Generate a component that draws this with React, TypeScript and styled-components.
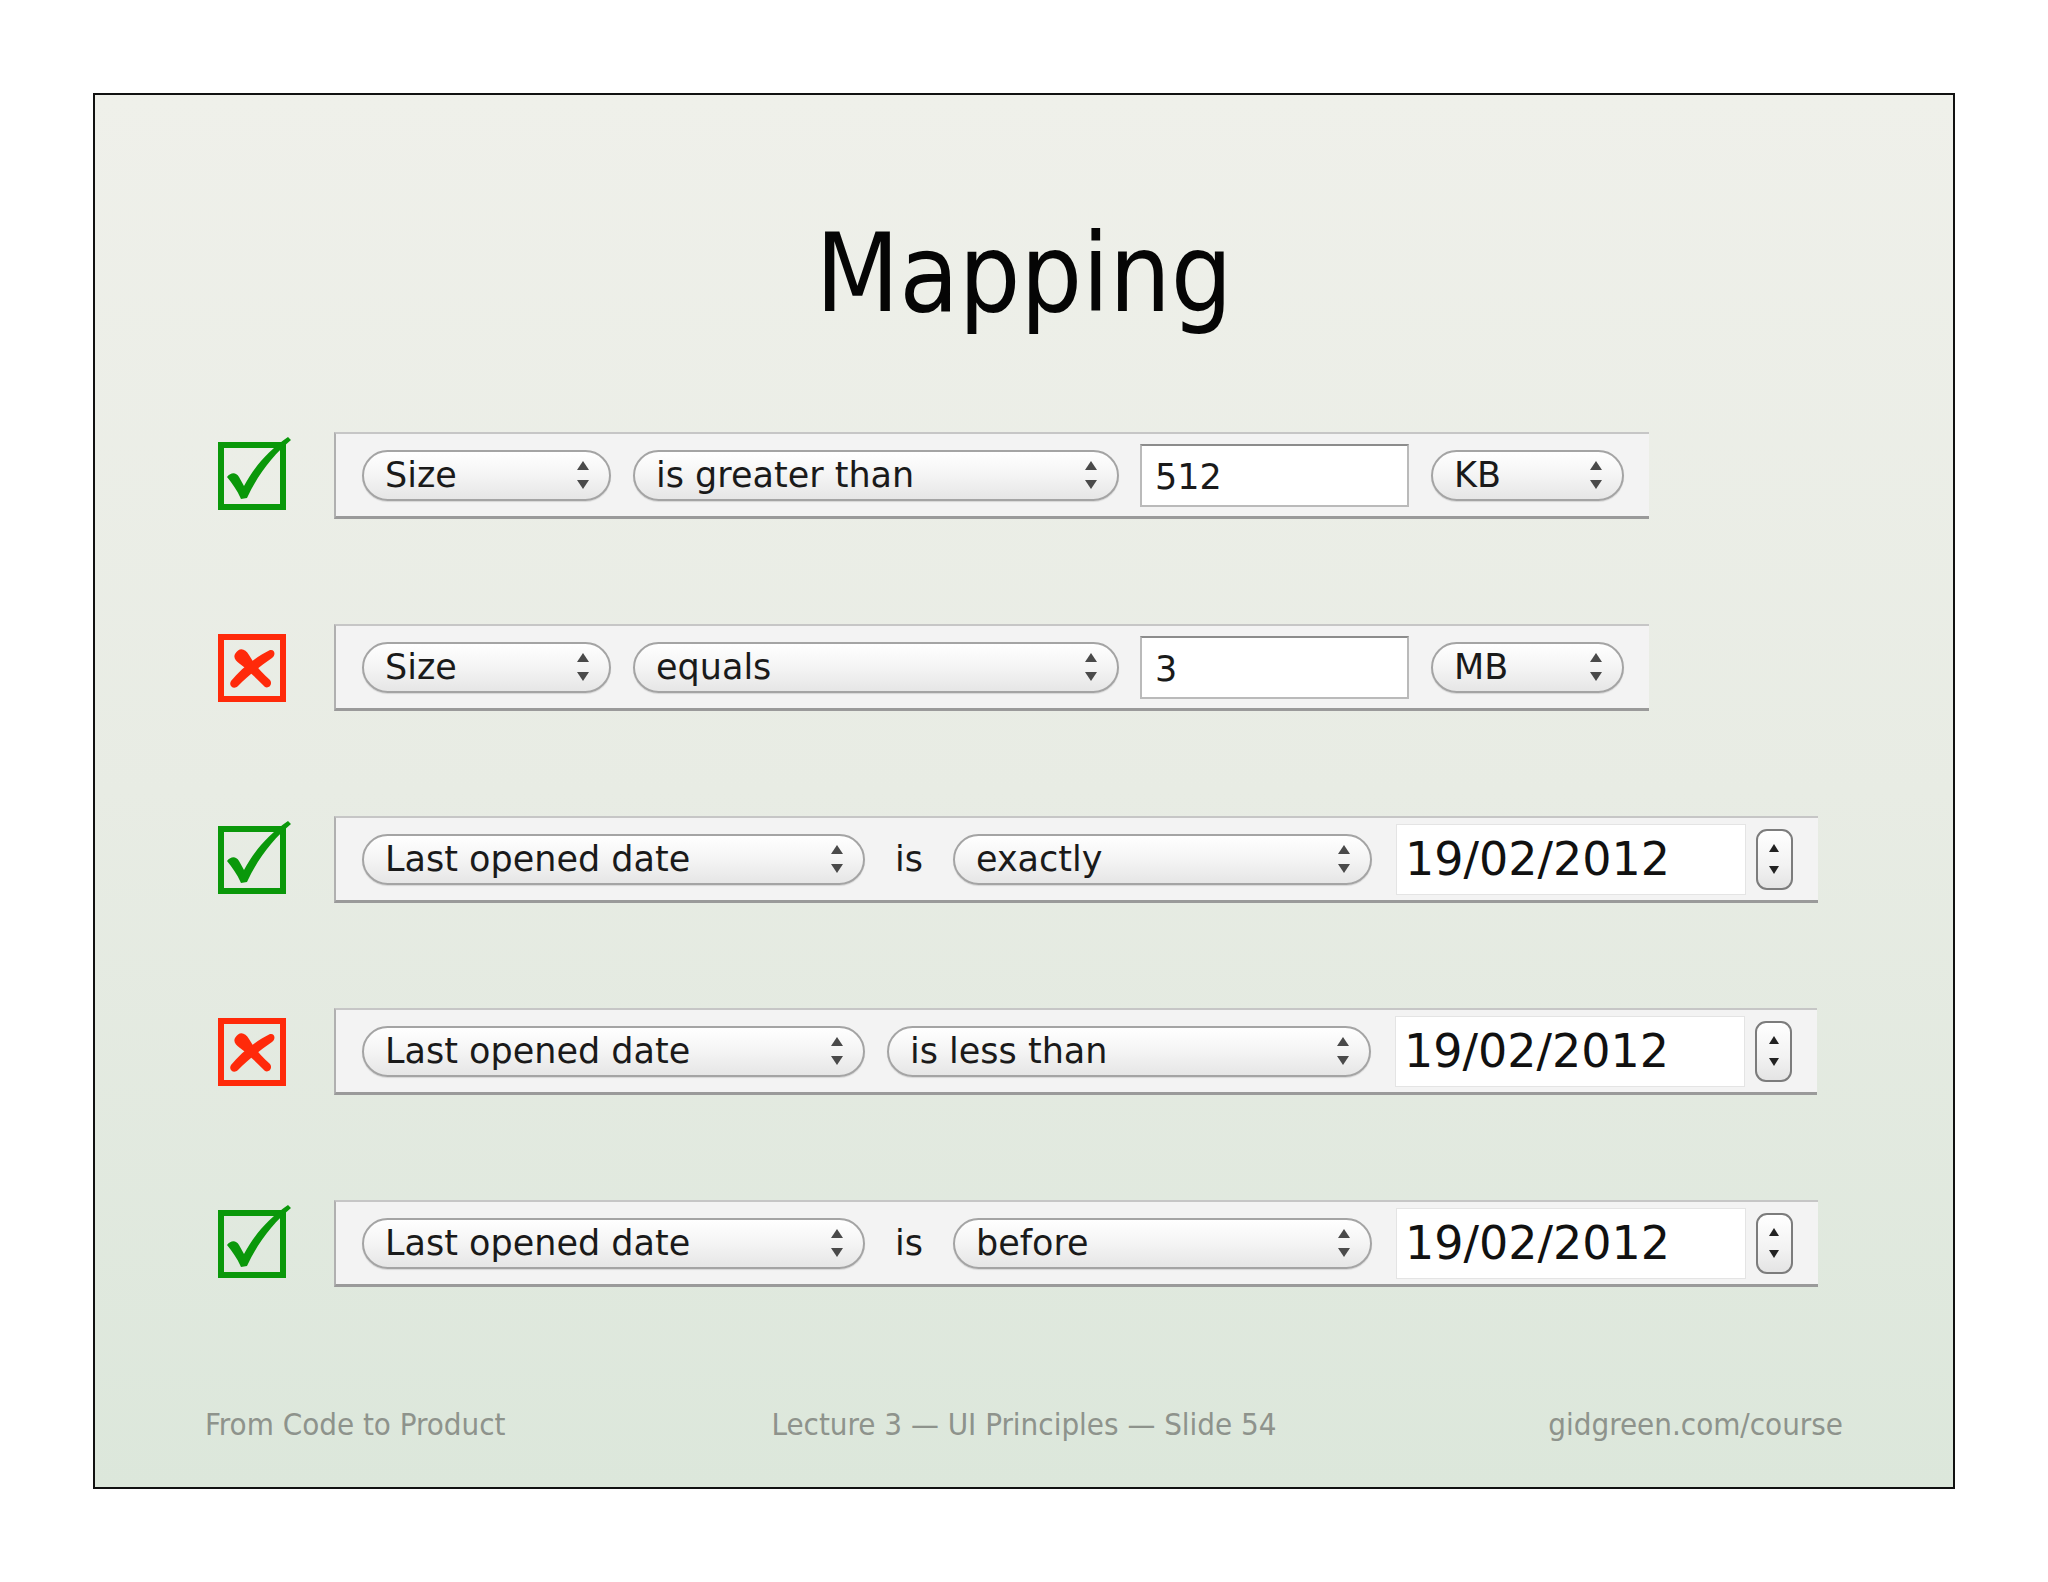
import React from 'react';
import styled, { createGlobalStyle } from 'styled-components';

const GlobalStyle = createGlobalStyle`
  html, body {
    margin: 0;
    padding: 0;
    background: #ffffff;
  }
  body {
    font-family: 'DejaVu Sans', 'Liberation Sans', sans-serif;
  }
`;

type Part =
  | { kind: 'popup'; text: string; width: number }
  | { kind: 'field'; text: string }
  | { kind: 'label'; text: string }
  | { kind: 'date'; text: string };

type Rule = { ok: boolean; parts: Part[] };

const rules: Rule[] = [
  {
    ok: true,
    parts: [
      { kind: 'popup', text: 'Size', width: 249 },
      { kind: 'popup', text: 'is greater than', width: 486 },
      { kind: 'field', text: '512' },
      { kind: 'popup', text: 'KB', width: 193 },
    ],
  },
  {
    ok: false,
    parts: [
      { kind: 'popup', text: 'Size', width: 249 },
      { kind: 'popup', text: 'equals', width: 486 },
      { kind: 'field', text: '3' },
      { kind: 'popup', text: 'MB', width: 193 },
    ],
  },
  {
    ok: true,
    parts: [
      { kind: 'popup', text: 'Last opened date', width: 503 },
      { kind: 'label', text: 'is' },
      { kind: 'popup', text: 'exactly', width: 419 },
      { kind: 'date', text: '19/02/2012' },
    ],
  },
  {
    ok: false,
    parts: [
      { kind: 'popup', text: 'Last opened date', width: 503 },
      { kind: 'popup', text: 'is less than', width: 484 },
      { kind: 'date', text: '19/02/2012' },
    ],
  },
  {
    ok: true,
    parts: [
      { kind: 'popup', text: 'Last opened date', width: 503 },
      { kind: 'label', text: 'is' },
      { kind: 'popup', text: 'before', width: 419 },
      { kind: 'date', text: '19/02/2012' },
    ],
  },
];

const CheckIcon = () => (
  <VerdictSvg viewBox="0 0 68 68">
    <rect x="3" y="3" width="62" height="62" fill="none" stroke="#0a980a" strokeWidth="6" />
    <path
      d="M9 35 C13 30 18 30 21 35 L26 44 C36 25 51 8 70 -5 L73 -2 C56 12 40 32 29 56 L23 57 C19 48 14 41 9 35 Z"
      fill="#0a980a"
    />
  </VerdictSvg>
);

const CrossIcon = () => (
  <VerdictSvg viewBox="0 0 68 68">
    <rect x="3" y="3" width="62" height="62" fill="none" stroke="#ff2a0a" strokeWidth="6" />
    <path
      d="M17 20 C21 13 27 14 31 21 C36 30 43 38 52 46 C55 50 51 55 47 53 C38 44 30 36 22 30 C18 27 15 24 17 20 Z"
      fill="#ff2a0a"
    />
    <path
      d="M52 16 C57 15 58 21 54 24 C42 32 30 42 20 52 C16 56 10 52 13 47 C22 36 36 24 52 16 Z"
      fill="#ff2a0a"
    />
  </VerdictSvg>
);

const UpDown = () => (
  <ArrowsSvg viewBox="0 0 12 28">
    <path d="M6 0 L12 9 L0 9 Z" fill="#4a4a4a" />
    <path d="M0 19 L12 19 L6 28 Z" fill="#4a4a4a" />
  </ArrowsSvg>
);

const renderPart = (part: Part, i: number) => {
  switch (part.kind) {
    case 'popup':
      return (
        <PopUp key={i} $width={part.width}>
          <span>{part.text}</span>
          <UpDown />
        </PopUp>
      );
    case 'field':
      return <TextField key={i}>{part.text}</TextField>;
    case 'label':
      return <Label key={i}>{part.text}</Label>;
    case 'date':
      return (
        <React.Fragment key={i}>
          <DateField>{part.text}</DateField>
          <Stepper>
            <StepTriangle $up />
            <StepTriangle />
          </Stepper>
        </React.Fragment>
      );
  }
};

export default function App() {
  return (
    <>
      <GlobalStyle />
      <Page>
        <Slide>
          <Title>Mapping</Title>
          <RuleList>
            {rules.map((rule, i) => (
              <RuleRow key={i}>
                <Verdict>{rule.ok ? <CheckIcon /> : <CrossIcon />}</Verdict>
                <Panel>{rule.parts.map(renderPart)}</Panel>
              </RuleRow>
            ))}
          </RuleList>
          <Footer>
            <FooterText $align="start">From Code to Product</FooterText>
            <FooterText $align="center">Lecture 3 — UI Principles — Slide 54</FooterText>
            <FooterText $align="end">gidgreen.com/course</FooterText>
          </Footer>
        </Slide>
      </Page>
    </>
  );
}

const Page = styled.div`
  width: 2048px;
  height: 1582px;
  padding: 93px 0 0 93px;
  box-sizing: border-box;
`;

const Slide = styled.div`
  width: 1862px;
  height: 1396px;
  box-sizing: border-box;
  border: 2px solid #111111;
  background: linear-gradient(180deg, #eff0ea 0%, #e8ece4 50%, #dce7db 100%);
  display: flex;
  flex-direction: column;
`;

const Title = styled.h1`
  margin: 0;
  padding-top: 125px;
  height: 108px;
  box-sizing: content-box;
  text-align: center;
  font-family: 'DejaVu Sans Condensed', 'DejaVu Sans', sans-serif;
  font-stretch: condensed;
  font-weight: 400;
  font-size: 108px;
  line-height: 108px;
  color: #050505;
`;

const RuleList = styled.div`
  margin-top: 104px;
  display: flex;
  flex-direction: column;
  gap: 105px;
`;

const RuleRow = styled.div`
  display: flex;
  align-items: center;
  gap: 48px;
  padding-left: 123px;
  height: 87px;
`;

const Verdict = styled.div`
  width: 68px;
  height: 68px;
  flex-shrink: 0;
`;

const VerdictSvg = styled.svg`
  width: 68px;
  height: 68px;
  overflow: visible;
  display: block;
`;

const Panel = styled.div`
  height: 87px;
  box-sizing: border-box;
  display: flex;
  align-items: center;
  gap: 22px;
  padding: 0 25px 0 26px;
  background: #f3f3f3;
  border-top: 2px solid #c6c6c6;
  border-bottom: 3px solid #9a9a9a;
  border-left: 2px solid #b0b0b0;
  font-family: 'DejaVu Sans', sans-serif;
  font-size: 35px;
  color: #1a1a1a;
`;

const PopUp = styled.div<{ $width: number }>`
  width: ${(p) => p.$width}px;
  height: 51px;
  box-sizing: border-box;
  flex-shrink: 0;
  display: flex;
  align-items: center;
  justify-content: space-between;
  padding: 0 20px 0 21px;
  border: 2px solid #a4a4a4;
  border-radius: 26px;
  background: linear-gradient(180deg, #ffffff 0%, #f4f4f4 50%, #e6e6e6 100%);
  box-shadow: 0 1px 1px rgba(0, 0, 0, 0.12);
  line-height: 1;
  white-space: nowrap;
`;

const ArrowsSvg = styled.svg`
  width: 12px;
  height: 28px;
  flex-shrink: 0;
`;

const TextField = styled.div`
  width: 269px;
  height: 63px;
  box-sizing: border-box;
  margin-left: -1px;
  display: flex;
  align-items: center;
  padding: 4px 0 0 13px;
  background: #ffffff;
  border: 2px solid #bababa;
  border-top-color: #8c8c8c;
  line-height: 1;
`;

const Label = styled.span`
  margin: 0 8px;
  line-height: 1;
`;

const DateField = styled.div`
  width: 350px;
  height: 71px;
  box-sizing: border-box;
  margin-left: 2px;
  display: flex;
  align-items: center;
  padding-left: 8px;
  background: #ffffff;
  border: 1px solid #e4e4e4;
  font-size: 46px;
  line-height: 1;
  color: #111111;
`;

const Stepper = styled.div`
  width: 37px;
  height: 61px;
  box-sizing: border-box;
  margin-left: -12px;
  display: flex;
  flex-direction: column;
  align-items: center;
  justify-content: center;
  gap: 14px;
  border: 2px solid #7c7c7c;
  border-radius: 11px;
  background: linear-gradient(180deg, #ffffff 0%, #f2f2f2 60%, #e4e4e4 100%);
`;

const StepTriangle = styled.div<{ $up?: boolean }>`
  width: 0;
  height: 0;
  border-left: 5px solid transparent;
  border-right: 5px solid transparent;
  ${(p) => (p.$up ? 'border-bottom: 8px solid #222;' : 'border-top: 8px solid #222;')}
`;

const Footer = styled.div`
  margin-top: auto;
  padding: 0 110px 47px;
  display: grid;
  grid-template-columns: 1fr auto 1fr;
  font-family: 'DejaVu Sans Condensed', 'DejaVu Sans', sans-serif;
  font-stretch: condensed;
  font-size: 31px;
  line-height: 31px;
  color: #8e938c;
`;

const FooterText = styled.span<{ $align: 'start' | 'center' | 'end' }>`
  justify-self: ${(p) => p.$align};
  white-space: nowrap;
`;
